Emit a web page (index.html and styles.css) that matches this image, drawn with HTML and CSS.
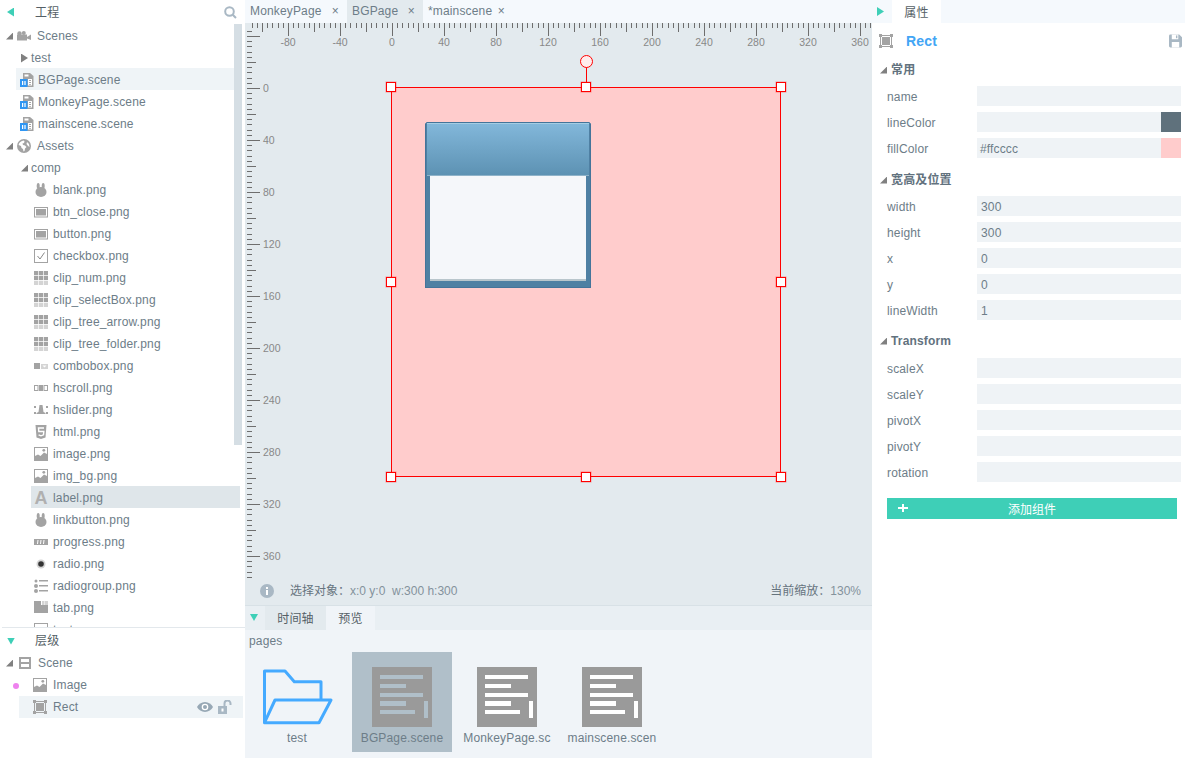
FILE: index.html
```html
<!DOCTYPE html>
<html lang="zh">
<head>
<meta charset="utf-8">
<title>LayaAir IDE</title>
<link rel="stylesheet" href="styles.css">
</head>
<body>
<svg class="sprite" aria-hidden="true">
  <symbol id="i-camera" viewBox="0 0 14 10"><circle cx="2.5" cy="2.5" r="2.2"/><circle cx="6.8" cy="2" r="2"/><rect x="0" y="3.5" width="10" height="6"/><path d="M10 6l4-2.5V9L10 7.5z"/></symbol>
  <symbol id="i-globe" viewBox="0 0 14 14"><circle cx="7" cy="7" r="7"/><path class="w" d="M7 1.5C4 1.7 2 3.500 1.600 6l2.400 1 .5 2 1.500 1 .5 2.500 1-.5 .5-2.500 1.500-1.500-1.500-1.500-2-.5-.5-1.500 1.500-.5.5-1.500zM10 3l2 2 .5 3-1.500-1-1.500-2z"/></symbol>
  <symbol id="i-scene" viewBox="0 0 14 14"><path d="M3 0h7l3.500 3v11H3z"/><path class="w" d="M8 6h4v6.500H8zM4.500 1.500h4v2h-4z"/><path d="M9 7h2v1H9zM9 9h2v1H9zM9 11h2v.8H9z"/><rect class="b" x="0" y="6" width="7.500" height="8"/><path class="w" d="M2 8h1.200v4H2zM4.400 8h1.200v4H4.400z"/></symbol>
  <symbol id="i-rabbit" viewBox="0 0 14 14"><ellipse cx="4.200" cy="3" rx="1.500" ry="3"/><ellipse cx="9.200" cy="3" rx="1.500" ry="3"/><ellipse cx="7" cy="9" rx="5.500" ry="5"/></symbol>
  <symbol id="i-btn" viewBox="0 0 14 14"><rect class="o" x=".5" y="2.500" width="13" height="9.500"/><rect x="2" y="4" width="10" height="6.500"/></symbol>
  <symbol id="i-check" viewBox="0 0 14 14"><rect class="o" x=".5" y=".5" width="13" height="13"/><path class="c" d="M3.500 7l2.500 3 4.500-6.500"/></symbol>
  <symbol id="i-clip" viewBox="0 0 14 14"><path d="M0 0h4.200v4.200H0zM4.900 0h4.200v4.200H4.900zM9.800 0H14v4.200H9.800zM0 4.900h4.200v4.200H0zM4.900 4.900h4.200v4.200H4.900zM9.800 4.900H14v4.200H9.800z"/><path class="l" d="M0 9.800h4.200V14H0zM4.900 9.800h4.200V14H4.900zM9.800 9.800H14V14H9.800z"/></symbol>
  <symbol id="i-combo" viewBox="0 0 14 14"><rect x="0" y="4" width="6" height="6"/><rect class="l" x="7" y="5" width="7" height="5"/><path class="w" d="M8.500 6.500h4l-2 2z"/></symbol>
  <symbol id="i-hscroll" viewBox="0 0 14 14"><rect class="o" x=".5" y="4.500" width="3.500" height="5"/><rect x="5" y="4" width="4" height="6"/><rect class="o" x="10" y="4.500" width="3.500" height="5"/></symbol>
  <symbol id="i-hslider" viewBox="0 0 14 14"><path d="M5.500 2h3l1 7 2 1v1h-9v-1l2-1zM0 3h2v2H0zM12 3h2v2h-2zM0 9h2v2H0zM12 9h2v2h-2z"/></symbol>
  <symbol id="i-html" viewBox="0 0 14 14"><path d="M1.500 0h11l-1 12.500L7 14l-4.500-1.500z"/><path class="s" d="M10 3H4.500l.3 3.500h5l-.3 3.300L7 10.800l-2.400-1"/></symbol>
  <symbol id="i-image" viewBox="0 0 14 14"><rect width="14" height="14"/><path class="w" d="M1 1h12v6l-3-1.500L6.500 9 4 7.500 1 9z"/><circle cx="9.800" cy="3.300" r="1.400"/></symbol>
  <symbol id="i-progress" viewBox="0 0 14 14"><rect y="4" width="14" height="6"/><path class="w" d="M3.500 5h1L4 9H3zM6.500 5h1L7 9H6zM9.500 5h1L10 9H9z"/></symbol>
  <symbol id="i-radio" viewBox="0 0 14 14"><circle class="l" cx="7" cy="7" r="4.500"/><circle class="k" cx="7" cy="7" r="2.800"/></symbol>
  <symbol id="i-radiogroup" viewBox="0 0 14 14"><circle cx="2" cy="2" r="1.500"/><circle cx="2" cy="7" r="2"/><circle cx="2" cy="12" r="2"/><path d="M5 1h9v1.500H5zM5 6h9v1.500H5zM5 11h9v1.500H5z"/></symbol>
  <symbol id="i-tab" viewBox="0 0 14 14"><rect y="0" width="7" height="4"/><path class="l" d="M8 0h2.500v4H8zM11 0h3v4h-3z"/><rect y="4" width="14" height="8"/></symbol>
  <symbol id="i-box" viewBox="0 0 14 14"><rect class="o" x=".5" y=".5" width="13" height="13"/></symbol>
  <symbol id="i-layer" viewBox="0 0 12 12"><path class="f" d="M1 1h10v10H1zM1 6h10"/></symbol>
  <symbol id="i-rect" viewBox="0 0 14 14"><path class="o" d="M1.500 1.500h11v11h-11z"/><path d="M0 0h3v3H0zM11 0h3v3h-3zM0 11h3v3H0zM11 11h3v3h-3zM3 3h8v8H3z"/></symbol>
  <symbol id="i-eye" viewBox="0 0 16 10"><path d="M8 0c3.500 0 6.500 2.200 8 5-1.500 2.800-4.500 5-8 5s-6.500-2.200-8-5c1.500-2.800 4.500-5 8-5z"/><circle class="w" cx="8" cy="5" r="3.300"/><circle cx="8" cy="5" r="2"/></symbol>
  <symbol id="i-lock" viewBox="0 0 14 14"><rect y="6" width="9" height="8"/><rect class="w" x="3.500" y="8.500" width="2" height="3"/><path class="r" d="M6.500 6V3.500a3 3 0 0 1 6 0V5"/></symbol>
  <symbol id="i-save" viewBox="0 0 14 14"><path d="M0 1.500A1.500 1.500 0 0 1 1.500 0H11l3 3v9.500a1.500 1.500 0 0 1-1.500 1.500h-11A1.500 1.500 0 0 1 0 12.500z"/><path class="w" d="M3 0h7v5H3zM3 8h8v6H3z"/><path d="M7.500 1H9v3H7.500z"/></symbol>
  <symbol id="i-info" viewBox="0 0 14 14"><circle cx="7" cy="7" r="7"/><path class="w" d="M6 3h2v2H6zM6 6h2v5H6z"/></symbol>
  <symbol id="i-search" viewBox="0 0 13 13"><circle class="r" cx="5.500" cy="5.500" r="4.300"/><path class="r" d="M8.700 8.700l3.300 3.300"/></symbol>
  <symbol id="i-doc" viewBox="0 0 60 60"><rect class="g" width="60" height="60"/><path d="M8 8h43v4H8zM8 17h26v4H8zM8 26h43v4H8zM8 34h26v5H8zM8 43h35v4H8zM52 34h4v17h-4z"/></symbol>
</svg>

<div class="app">
  <aside class="left">
    <div class="tree-pane">
      <header class="pane-head">
        <span class="arrow arrow-left"></span>
        <span class="pane-title">工程</span>
        <svg class="search"><use href="#i-search"/></svg>
      </header>
      <div class="row d0"><span class="tri"></span><svg class="ic ic-cam"><use href="#i-camera"/></svg><span>Scenes</span></div>
      <div class="row d1"><span class="tri tri-closed"></span><span>test</span></div>
      <div class="row file hl-soft"><svg class="ic"><use href="#i-scene"/></svg><span>BGPage.scene</span></div>
      <div class="row file"><svg class="ic"><use href="#i-scene"/></svg><span>MonkeyPage.scene</span></div>
      <div class="row file"><svg class="ic"><use href="#i-scene"/></svg><span>mainscene.scene</span></div>
      <div class="row d0"><span class="tri"></span><svg class="ic"><use href="#i-globe"/></svg><span>Assets</span></div>
      <div class="row d1"><span class="tri"></span><span>comp</span></div>
      <div class="row asset"><svg class="ic"><use href="#i-rabbit"/></svg><span>blank.png</span></div>
      <div class="row asset"><svg class="ic"><use href="#i-btn"/></svg><span>btn_close.png</span></div>
      <div class="row asset"><svg class="ic"><use href="#i-btn"/></svg><span>button.png</span></div>
      <div class="row asset"><svg class="ic"><use href="#i-check"/></svg><span>checkbox.png</span></div>
      <div class="row asset"><svg class="ic"><use href="#i-clip"/></svg><span>clip_num.png</span></div>
      <div class="row asset"><svg class="ic"><use href="#i-clip"/></svg><span>clip_selectBox.png</span></div>
      <div class="row asset"><svg class="ic"><use href="#i-clip"/></svg><span>clip_tree_arrow.png</span></div>
      <div class="row asset"><svg class="ic"><use href="#i-clip"/></svg><span>clip_tree_folder.png</span></div>
      <div class="row asset"><svg class="ic"><use href="#i-combo"/></svg><span>combobox.png</span></div>
      <div class="row asset"><svg class="ic"><use href="#i-hscroll"/></svg><span>hscroll.png</span></div>
      <div class="row asset"><svg class="ic"><use href="#i-hslider"/></svg><span>hslider.png</span></div>
      <div class="row asset"><svg class="ic"><use href="#i-html"/></svg><span>html.png</span></div>
      <div class="row asset"><svg class="ic"><use href="#i-image"/></svg><span>image.png</span></div>
      <div class="row asset"><svg class="ic"><use href="#i-image"/></svg><span>img_bg.png</span></div>
      <div class="row asset hl-strong"><span class="ic glyph-a">A</span><span>label.png</span></div>
      <div class="row asset"><svg class="ic"><use href="#i-rabbit"/></svg><span>linkbutton.png</span></div>
      <div class="row asset"><svg class="ic"><use href="#i-progress"/></svg><span>progress.png</span></div>
      <div class="row asset"><svg class="ic"><use href="#i-radio"/></svg><span>radio.png</span></div>
      <div class="row asset"><svg class="ic"><use href="#i-radiogroup"/></svg><span>radiogroup.png</span></div>
      <div class="row asset"><svg class="ic"><use href="#i-tab"/></svg><span>tab.png</span></div>
      <div class="row asset"><svg class="ic"><use href="#i-box"/></svg><span>textarea.png</span></div>
      <div class="scrollbar"></div>
    </div>
    <div class="split"></div>
    <div class="layer-pane">
      <header class="pane-head layer-head">
        <span class="arrow arrow-down"></span>
        <span class="pane-title">层级</span>
      </header>
      <div class="row d0"><span class="tri"></span><svg class="ic ic-layer"><use href="#i-layer"/></svg><span>Scene</span></div>
      <div class="row node"><span class="dot"></span><svg class="ic"><use href="#i-image"/></svg><span>Image</span></div>
      <div class="row node node-sel"><svg class="ic"><use href="#i-rect"/></svg><span class="grow">Rect</span><svg class="eye"><use href="#i-eye"/></svg><svg class="lock"><use href="#i-lock"/></svg></div>
    </div>
  </aside>

  <main class="center">
    <nav class="tabs">
      <div class="tab tab-a"><span>MonkeyPage</span><span class="x">×</span></div>
      <div class="tab tab-b tab-on"><span>BGPage</span><span class="x">×</span></div>
      <div class="tab tab-c"><span>*mainscene</span><span class="x">×</span></div>
    </nav>
    <section class="stage">
      <svg class="hticks">
        <defs><pattern id="ph" patternUnits="userSpaceOnUse" x="38" y="0" width="52" height="13">
          <rect x="0" width="1" height="13"/><rect x="5" width="1" height="5"/><rect x="10" width="1" height="5"/><rect x="16" width="1" height="5"/><rect x="21" width="1" height="5"/><rect x="26" width="1" height="9"/><rect x="31" width="1" height="5"/><rect x="36" width="1" height="5"/><rect x="42" width="1" height="5"/><rect x="47" width="1" height="5"/>
        </pattern></defs>
        <rect width="100%" height="13" fill="url(#ph)"/>
      </svg>
      <div class="ruler-body">
        <svg class="vticks">
          <defs><pattern id="pv" patternUnits="userSpaceOnUse" x="0" y="6" width="15" height="52">
            <rect y="0" x="2" height="1" width="13"/><rect y="5" x="2" height="1" width="5"/><rect y="10" x="2" height="1" width="5"/><rect y="16" x="2" height="1" width="5"/><rect y="21" x="2" height="1" width="5"/><rect y="26" x="2" height="1" width="9"/><rect y="31" x="2" height="1" width="5"/><rect y="36" x="2" height="1" width="5"/><rect y="42" x="2" height="1" width="5"/><rect y="47" x="2" height="1" width="5"/>
          </pattern></defs>
          <rect width="15" height="100%" fill="url(#pv)"/>
        </svg>
        <div class="ruler-labels">
          <div class="hlabels"><span>-80</span><span>-40</span><span>0</span><span>40</span><span>80</span><span>120</span><span>160</span><span>200</span><span>240</span><span>280</span><span>320</span><span>360</span></div>
          <div class="vlabels"><span>0</span><span>40</span><span>80</span><span>120</span><span>160</span><span>200</span><span>240</span><span>280</span><span>320</span><span>360</span></div>
        </div>
      </div>
      <div class="status">
        <svg class="info"><use href="#i-info"/></svg>
        <span class="status-text"><b>选择对象：</b>x:0 y:0&nbsp; w:300 h:300</span>
        <span class="status-zoom"><b>当前缩放：</b>130%</span>
      </div>

      <div class="sel-rect">
        <div class="win">
          <div class="win-title"></div>
          <div class="win-body"></div>
        </div>
        <span class="rot-line"></span>
        <span class="rot-knob"></span>
        <span class="h h-tl"></span><span class="h h-tc"></span><span class="h h-tr"></span>
        <span class="h h-ml"></span><span class="h h-mr"></span>
        <span class="h h-bl"></span><span class="h h-bc"></span><span class="h h-br"></span>
      </div>
    </section>

    <section class="bottom">
      <div class="bottom-tabs">
        <span class="arrow arrow-down arrow-bottom"></span>
        <span class="btab btab-time">时间轴</span>
        <span class="btab btab-prev">预览</span>
      </div>
      <div class="bottom-body">
        <div class="crumb">pages</div>
        <div class="thumbs">
          <div class="thumb">
            <div class="thumb-img"><svg class="folder" viewBox="0 0 70 56"><path d="M1.500 2H22l9.300 10.700H58V31M12 31h56L56 53.700H1.500zM1.500 53.700V2"/></svg></div>
            <div class="thumb-name">test</div>
          </div>
          <div class="thumb thumb-sel">
            <div class="thumb-img"><svg class="doc"><use href="#i-doc"/></svg></div>
            <div class="thumb-name">BGPage.scene</div>
          </div>
          <div class="thumb">
            <div class="thumb-img"><svg class="doc"><use href="#i-doc"/></svg></div>
            <div class="thumb-name">MonkeyPage.sc</div>
          </div>
          <div class="thumb">
            <div class="thumb-img"><svg class="doc"><use href="#i-doc"/></svg></div>
            <div class="thumb-name">mainscene.scen</div>
          </div>
        </div>
      </div>
    </section>
  </main>

  <aside class="right">
    <nav class="prop-tabs">
      <span class="arrow arrow-right"></span>
      <span class="prop-tab">属性</span>
    </nav>
    <div class="comp-head">
      <svg class="ic"><use href="#i-rect"/></svg>
      <span class="comp-name">Rect</span>
      <svg class="save"><use href="#i-save"/></svg>
    </div>

    <div class="sec sec-cjk"><span class="tri"></span><span>常用</span></div>
    <div class="fields">
      <div class="field"><label>name</label><div class="val"></div></div>
      <div class="field"><label>lineColor</label><div class="val"><span class="grow"></span><span class="swatch sw-line"></span></div></div>
      <div class="field"><label>fillColor</label><div class="val val-tight"><span class="grow">#ffcccc</span><span class="swatch sw-fill"></span></div></div>
    </div>

    <div class="sec sec-cjk"><span class="tri"></span><span>宽高及位置</span></div>
    <div class="fields">
      <div class="field"><label>width</label><div class="val">300</div></div>
      <div class="field"><label>height</label><div class="val">300</div></div>
      <div class="field"><label>x</label><div class="val">0</div></div>
      <div class="field"><label>y</label><div class="val">0</div></div>
      <div class="field"><label>lineWidth</label><div class="val">1</div></div>
    </div>

    <div class="sec"><span class="tri"></span><span>Transform</span></div>
    <div class="fields">
      <div class="field"><label>scaleX</label><div class="val"></div></div>
      <div class="field"><label>scaleY</label><div class="val"></div></div>
      <div class="field"><label>pivotX</label><div class="val"></div></div>
      <div class="field"><label>pivotY</label><div class="val"></div></div>
      <div class="field"><label>rotation</label><div class="val"></div></div>
    </div>

    <button class="add"><span class="plus"></span><span class="add-text">添加组件</span></button>
  </aside>
</div>
</body>
</html>
```

FILE: styles.css
```css
* { box-sizing: border-box; }
html, body { margin: 0; height: 100%; overflow: hidden; background: #fff; }
body {
  font: 12px/1.2 "Liberation Sans", "Noto Sans CJK SC", sans-serif;
  letter-spacing: .15px;
  color: #6d7d88;
}
.sprite { position: absolute; width: 0; height: 0; }
.app { display: flex; width: 1185px; height: 758px; }
.grow { flex: 1; }

/* shared icon paints */
svg { fill: #a3a3a3; display: block; }
symbol .w { fill: #fff; }
symbol .l { fill: #d4d4d4; }
symbol .k { fill: #333; }
symbol .b { fill: #2f96f3; }
symbol .o { fill: none; stroke: #a3a3a3; stroke-width: 1; }
symbol .c { fill: none; stroke: #888; stroke-width: 1; }
symbol .s { fill: none; stroke: #fff; stroke-width: 1.4; }
symbol .f { fill: none; stroke: #a3a3a3; stroke-width: 2; }
symbol .r { fill: none; stroke: #a9b8c4; stroke-width: 2; }

.tri {
  display: block; flex: none; width: 7px; height: 7px; background: #808080;
  clip-path: polygon(100% 0, 100% 100%, 0 100%);
}
.tri-closed { height: 9px; width: 7px; clip-path: polygon(0 0, 100% 50%, 0 100%); }
.arrow { display: block; flex: none; background: #3ecfb7; }
.arrow-left { width: 7px; height: 9px; clip-path: polygon(100% 0, 100% 100%, 0 50%); }
.arrow-right { width: 7px; height: 9px; clip-path: polygon(0 0, 100% 50%, 0 100%); }
.arrow-down { width: 8px; height: 7px; clip-path: polygon(0 0, 100% 0, 50% 100%); }

/* left column */
.left { width: 245px; flex: none; display: flex; flex-direction: column; }
.tree-pane { position: relative; height: 627px; overflow: hidden; flex: none; }
.tree-pane .row { padding-top: 2px; }
.split { flex: none; height: 1px; margin: 0 0 2px 2px; background: #e3e8ec; }
.pane-head { display: flex; align-items: center; height: 24px; padding-left: 7px; }
.pane-title { margin-left: 21px; color: #555f66; }
.tree-pane .pane-title { padding-top: 2px; }
.search { width: 13px; height: 13px; margin-left: auto; margin-right: 8px; }
.row { display: flex; align-items: center; height: 22px; white-space: nowrap; }
.ic { display: block; flex: none; width: 14px; height: 14px; }
.d0 { padding-left: 6px; }
.d0 .tri { margin-right: 4px; }
.d0 .ic { margin-right: 6px; }
.d0 .ic-layer { width: 12px; height: 12px; margin: 0 7px 0 2px; }
.ic-cam { height: 10px; }
.d1 { padding-left: 21px; }
.d1 .tri { margin-right: 3px; }
.file { margin-left: 16px; width: 218px; padding-left: 4px; }
.file .ic { margin-right: 4px; }
.hl-soft { background: #eff4f7; }
.asset { margin-left: 31px; width: 209px; padding-left: 3px; }
.asset .ic { margin-right: 5px; }
.hl-strong { background: #dfe6ea; }
.glyph-a { font-size: 18px; font-weight: bold; line-height: 14px; color: #b0b0b0; text-align: center; letter-spacing: 0; }
.scrollbar {
  position: absolute; left: 234px; top: 24px; width: 8px; height: 421px; background: #d5dee4;
}
.layer-pane { flex: 1; }
.layer-head { height: 22px; }
.layer-head .pane-title { margin-left: 20px; }
.node { padding-left: 33px; position: relative; }
.node .ic { margin-right: 6px; }
.dot { position: absolute; left: 13px; top: 9px; width: 6px; height: 6px; border-radius: 50%; background: #ee82ee; }
.node-sel { margin-left: 19px; width: 224px; padding-left: 14px; background: #eff4f7; }
.eye { width: 16px; height: 10px; fill: #97a8b5; }
.lock { width: 14px; height: 14px; margin: 0 11px 0 5px; fill: #a9b8c4; }

/* centre */
.center { width: 627px; flex: none; display: flex; flex-direction: column; }
.tabs { display: flex; height: 23px; background: #f5f9fd; }
.tab { display: flex; align-items: center; height: 23px; justify-content: space-between; padding-left: 5px; }
.tab .x { font-size: 12px; color: #6d7d88; }
.tab-a { width: 102px; padding-right: 8px; }
.tab-b { width: 76px; padding-right: 8px; }
.tab-c { width: 87px; padding-right: 5px; }
.tab-on { background: #e3eaee; }

.stage { position: relative; height: 583px; background: #e3eaee; }
.hticks { width: 622px; height: 13px; margin-left: 5px; fill: #6e6e6e; }
.ruler-body { display: flex; height: 542px; }
.vticks { flex: none; width: 17px; height: 548px; margin-top: -6px; fill: #6e6e6e; }
.ruler-labels { flex: 1; font-size: 10.5px; color: #888; letter-spacing: 0; }
.hlabels { display: flex; height: 12px; line-height: 12px; }
.hlabels span { width: 52px; text-align: center; flex: none; }
.vlabels { display: flex; flex-direction: column; gap: 38px; margin-top: 33px; padding-left: 1px; }
.vlabels span { height: 14px; line-height: 14px; }

.status { display: flex; align-items: center; height: 28px; padding: 0 11px 1px 15px; border-bottom: 1px solid #d8e1e6; letter-spacing: 0; }
.info { width: 14px; height: 14px; fill: #a9b8c4; }
.status-text { margin-left: 16px; color: #84929c; }
.status-zoom { margin-left: auto; color: #84929c; }
.status b { font-weight: normal; color: #66747e; }

.sel-rect {
  position: absolute; left: 146px; top: 64px; width: 390px; height: 390px;
  background: #ffcccc; border: 1px solid #f00;
}
.win {
  position: absolute; left: 33px; top: 34px; width: 166px; height: 166px;
  display: flex; flex-direction: column; padding: 0 4px 6px;
  background: #4f80a3; border: 1px solid #44749a;
  clip-path: polygon(2px 0, calc(100% - 2px) 0, 100% 2px, 100% 100%, 0 100%, 0 2px);
}
.win-title {
  flex: none; height: 53px; margin: 0 -3px;
  background: linear-gradient(#82b7da, #5d92b3);
  border-top: 1px solid #a5cde3;
  border-bottom: 1px solid #8fb3c9;
}
.win-body { flex: 1; background: #f5f7fa; border-bottom: 2px solid #b9c6cc; }
.h {
  position: absolute; width: 10px; height: 10px; background: #fff;
  border: 1px solid #f00; box-shadow: 0 0 0 .5px rgba(255, 0, 0, .35);
}
.h-tl { left: -6px; top: -6px; }
.h-tc { left: 189px; top: -6px; }
.h-tr { left: 384px; top: -6px; }
.h-ml { left: -6px; top: 189px; }
.h-mr { left: 384px; top: 189px; }
.h-bl { left: -6px; top: 384px; }
.h-bc { left: 189px; top: 384px; }
.h-br { left: 384px; top: 384px; }
.rot-line { position: absolute; left: 194px; top: -21px; width: 1px; height: 15px; background: #f00; }
.rot-knob { position: absolute; left: 188px; top: -33px; width: 13px; height: 13px; border: 1px solid #f00; border-radius: 50%; background: #ffecec; }

/* bottom */
.bottom { flex: 1; display: flex; flex-direction: column; background: #f0f4f8; }
.bottom-tabs { display: flex; height: 24px; background: #e9eff3; align-items: stretch; }
.arrow-bottom { margin: 8px 7px 0 5px; }
.btab { display: flex; align-items: center; justify-content: center; padding-top: 3px; color: #555f66; }
.btab-time { width: 61px; background: #e3eaee; }
.btab-prev { width: 49px; background: #f0f4f8; }
.bottom-body { flex: 1; padding-left: 2px; }
.crumb { height: 22px; line-height: 22px; padding-left: 2px; }
.thumbs { display: flex; gap: 5px; }
.thumb { width: 100px; height: 100px; padding-top: 15px; }
.thumb-sel { background: #b0bfc9; }
.thumb-img { height: 60px; display: flex; justify-content: center; align-items: center; }
.doc { width: 60px; height: 60px; fill: #fff; }
symbol .g { fill: #9a9a9a; }
.thumb-sel .doc { fill: #b0bfc9; }
.folder { width: 70px; height: 56px; margin-left: 1px; fill: none; stroke: #45aaff; stroke-width: 3; stroke-linejoin: round; stroke-linecap: round; }
.thumb-name { margin-top: 4px; height: 14px; line-height: 14px; text-align: center; white-space: nowrap; }

/* right */
.right { width: 313px; flex: none; background: #fff; }
.prop-tabs { display: flex; height: 23px; align-items: center; background: #f5f9fd; padding-left: 5px; }
.prop-tab {
  align-self: stretch; display: flex; align-items: center; justify-content: center;
  width: 49px; margin-left: 8px; padding-top: 3px; background: #fff; color: #555f66;
}
.comp-head { display: flex; align-items: center; height: 36px; padding-left: 7px; }
.comp-name { margin-left: 13px; font-size: 14px; font-weight: bold; color: #42a5f5; }
.save { width: 13px; height: 14px; margin-left: auto; margin-right: 3px; fill: #a9b8c4; }
.sec { display: flex; align-items: center; gap: 4px; height: 20px; padding-left: 8px; font-weight: bold; color: #62727e; }
.sec-cjk { padding-top: 2px; }
.sec .tri { width: 7px; height: 7px; }
.fields { display: flex; flex-direction: column; gap: 6px; margin: 7px 0 11px; }
.field { display: flex; height: 20px; align-items: center; padding-left: 15px; }
.field label { width: 90px; flex: none; padding-top: 2px; }
.val { display: flex; width: 204px; height: 20px; line-height: 22px; padding-left: 4px; background: #eff3f6; }
.val-tight { padding-left: 3px; }
.swatch { width: 20px; flex: none; }
.sw-line { background: #5f717c; }
.sw-fill { background: #ffcccc; }
.add {
  position: relative; display: block; width: 290px; height: 21px; margin: 16px 0 0 15px; padding: 4px 0 0;
  border: 0; background: #3ecfb7; color: #fff; font: inherit; text-align: center;
}
.add-text { line-height: 17px; }
.plus {
  position: absolute; left: 11px; top: 6px; width: 10px; height: 8px;
  background: linear-gradient(#fff, #fff) center/10px 2px no-repeat, linear-gradient(#fff, #fff) center/2px 8px no-repeat;
}
```
